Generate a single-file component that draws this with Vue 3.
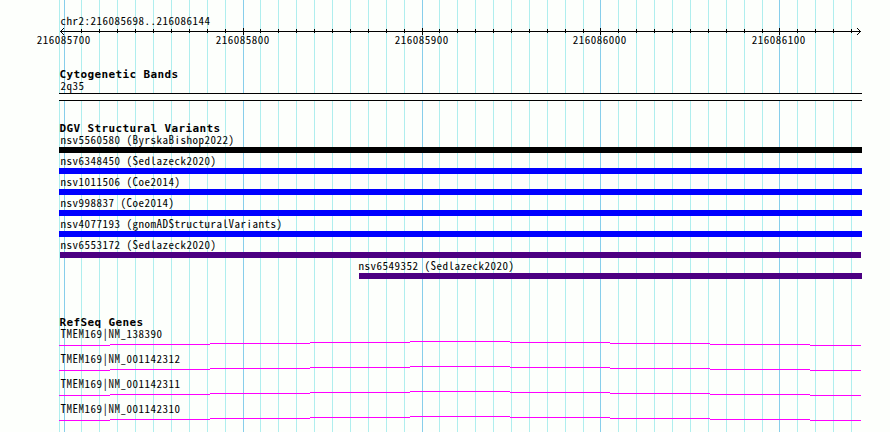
<script setup>
    const majorTicks = [
        { x: 64, label: '216085700' },
        { x: 243, label: '216085800' },
        { x: 422, label: '216085900' },
        { x: 600, label: '216086000' },
        { x: 779, label: '216086100' },
    ]

    // first minor division after each major one; the rest follow every 18px
    const minorStarts = [81, 260, 439, 618]

    const minorTicks = [
        ...minorStarts.flatMap((start) => Array.from({ length: 9 }, (_, i) => start + i * 18)),
        797, 815, 833, 851,
    ]

    const variants = [
        { name: 'nsv5560580 (ByrskaBishop2022)', color: 'black' },
        { name: 'nsv6348450 (Sedlazeck2020)', color: 'blue' },
        { name: 'nsv1011506 (Coe2014)', color: 'blue' },
        { name: 'nsv998837 (Coe2014)', color: 'blue' },
        { name: 'nsv4077193 (gnomADStructuralVariants)', color: 'blue' },
        { name: 'nsv6553172 (Sedlazeck2020)', color: 'indigo' },
        { name: 'nsv6549352 (Sedlazeck2020)', color: 'indigo', late: true },
    ]

    const genes = [
        'TMEM169|NM_138390',
        'TMEM169|NM_001142312',
        'TMEM169|NM_001142311',
        'TMEM169|NM_001142310',
    ]
</script>

<template>
  <div class="browser">
    <svg class="grid" width="890" height="432" shape-rendering="crispEdges">
      <rect class="grid__minor" x="59" y="0" width="1" height="432" />
      <rect v-for="x in minorTicks" :key="x" class="grid__minor" :x="x" y="0" width="1" height="432" />
      <rect v-for="tick in majorTicks" :key="tick.x" class="grid__major" :x="tick.x" y="0" width="1" height="432" />
    </svg>

    <header class="ruler">
      <div class="label">chr2:216085698..216086144</div>
      <svg class="ruler__axis" width="890" height="7" shape-rendering="crispEdges">
        <rect x="60" y="3" width="801" height="1" />
        <rect v-for="x in minorTicks" :key="x" :x="x" y="1" width="1" height="4" />
        <rect v-for="tick in majorTicks.slice(1)" :key="tick.x" :x="tick.x" y="0" width="1" height="7" />
        <path d="M61 2h1v1h-1zM61 4h1v1h-1zM62 1h1v1h-1zM62 5h1v1h-1zM63 0h1v1h-1zM63 6h1v1h-1z" />
        <path d="M859 2h1v1h-1zM859 4h1v1h-1zM858 1h1v1h-1zM858 5h1v1h-1zM857 0h1v1h-1zM857 6h1v1h-1z" />
      </svg>
      <div class="ruler__numbers">
        <span v-for="tick in majorTicks" :key="tick.x" class="label">{{ tick.label }}</span>
      </div>
    </header>

    <section class="track track--bands">
      <h2 class="track__title">Cytogenetic Bands</h2>
      <div class="label">2q35</div>
      <div class="band"></div>
    </section>

    <section class="track track--variants">
      <h2 class="track__title">DGV Structural Variants</h2>
      <div
        v-for="variant in variants"
        :key="variant.name"
        :class="['variant', `variant--${variant.color}`, { 'variant--late': variant.late }]"
      >
        <div class="label">{{ variant.name }}</div>
        <div class="variant__bar"></div>
      </div>
    </section>

    <section class="track track--genes">
      <h2 class="track__title">RefSeq Genes</h2>
      <div v-for="gene in genes" :key="gene" class="gene">
        <div class="label">{{ gene }}</div>
        <svg class="gene__intron" width="802" height="5" shape-rendering="crispEdges">
          <path d="M0 4.5H51M51 3.5H151M151 2.5H251M251 1.5H351M351 .5H451M451 1.5H551M551 2.5H651M651 3.5H751M751 4.5H802" />
        </svg>
      </div>
    </section>
  </div>
</template>

<style>
  body {
    margin: 0;
    background: #fdfffc;
  }
</style>

<style scoped>
  .browser {
    position: relative;
    width: 890px;
    height: 432px;
    overflow: hidden;
    background: #fdfffc;
    color: #000;
  }

  .grid {
    position: absolute;
    top: 0;
    left: 0;
    z-index: 0;
  }

  .grid__minor {
    fill: #afeeee;
  }

  .grid__major {
    fill: #87ceeb;
  }

  .ruler,
  .track {
    position: relative;
    z-index: 1;
  }

  .label {
    height: 13px;
    padding-left: 1.6px;
    font-family: 'Noto Sans CJK SC', 'DejaVu Sans Mono', monospace;
    font-feature-settings: 'hwid';
    font-size: 11px;
    font-weight: 400;
    line-height: 11px;
    letter-spacing: 0.5px;
    white-space: pre;
  }

  .ruler {
    padding-top: 15px;
  }

  .ruler > .label {
    padding-left: 60.6px;
  }

  .ruler__axis {
    display: block;
  }

  .ruler__numbers {
    display: grid;
    grid-template-columns: 179px 179px 178px 179px 60px;
    margin-top: -1px;
    padding-left: 36.7px;
  }

  .ruler__numbers .label {
    padding: 0;
  }

  .track {
    width: 803px;
    margin-left: 59px;
  }

  .track--bands {
    margin-top: 21px;
  }

  .track--variants {
    margin-top: 21px;
  }

  .track--genes {
    margin-top: 37px;
  }

  .track__title {
    height: 12px;
    margin: 0;
    padding-left: 0.5px;
    font-family: 'DejaVu Sans Mono', monospace;
    font-size: 11px;
    font-weight: 700;
    line-height: 14px;
    letter-spacing: 0.378px;
    white-space: pre;
  }

  .band {
    box-sizing: border-box;
    height: 8px;
    border-top: 1px solid #000;
    border-bottom: 1px solid #000;
    background: #fdfffc;
  }

  .variant {
    margin-bottom: 2px;
  }

  .variant:last-child {
    margin-bottom: 0;
  }

  .variant__bar {
    height: 6px;
    background: #000;
  }

  .variant--blue .variant__bar {
    background: #00f;
  }

  .variant--indigo .variant__bar {
    margin: 0 1px;
    background: #4b0082;
  }

  .variant--late {
    padding-left: 299px;
  }

  .variant--late .label {
    padding-left: 0.6px;
  }

  .variant--late .variant__bar {
    margin-right: 0;
    margin-left: 1px;
  }

  .gene {
    height: 18px;
    margin-bottom: 7px;
  }

  .gene__intron {
    display: block;
    fill: none;
    stroke: #f0f;
    stroke-width: 1px;
  }
</style>
